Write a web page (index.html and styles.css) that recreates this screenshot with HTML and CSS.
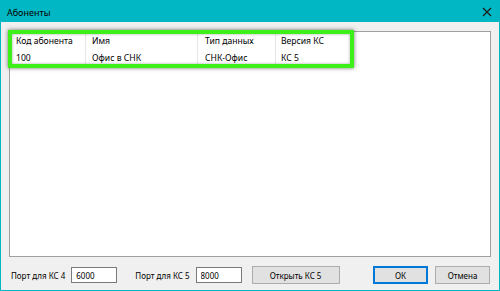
FILE: index.html
```html
<!DOCTYPE html>
<html lang="ru">
<head>
    <meta charset="UTF-8">
    <title>Абоненты</title>
    <link rel="stylesheet" href="styles.css">
</head>
<body>
    <div class="window">
        <div class="titlebar">
            <span class="title">Абоненты</span>
            <svg class="close" width="10" height="10" viewBox="0 0 10 10">
                <path d="M1 1 L9 9 M9 1 L1 9" stroke="#1a1a1a" stroke-width="1.2"/>
            </svg>
        </div>

        <div class="content">
            <div class="list">
                <div class="row header">
                    <div class="cell c1">Код абонента</div>
                    <div class="cell c2">Имя</div>
                    <div class="cell c3">Тип данных</div>
                    <div class="cell c4">Версия КС</div>
                </div>
                <div class="row">
                    <div class="cell c1">100</div>
                    <div class="cell c2">Офис в СНК</div>
                    <div class="cell c3">СНК-Офис</div>
                    <div class="cell c4">КС 5</div>
                </div>
            </div>
            <!-- annotation frame over the first rows -->
            <div class="highlight"></div>
        </div>

        <div class="footer">
            <label class="lbl">Порт для КС 4</label>
            <input class="port" type="text" value="6000">
            <label class="lbl second">Порт для КС 5</label>
            <input class="port" type="text" value="8000">
            <button class="btn open">Открыть КС 5</button>
            <button class="btn ok">ОК</button>
            <button class="btn cancel">Отмена</button>
        </div>
    </div>
</body>
</html>
```

FILE: styles.css
```css
body {
    margin: 0;
    font-family: "Noto Sans", "Open Sans", sans-serif;
    background-color: #f0f0f0;
}

.window {
    width: 500px;
    height: 291px;
    box-sizing: border-box;
    border: 1px solid #00b7c3;
    border-top: none;
    background-color: #f0f0f0;
    display: flex;
    flex-direction: column;
}

.titlebar {
    height: 22px;
    background-color: #00b7c3;
    margin: 0 -1px;
    display: flex;
    align-items: center;
    justify-content: space-between;
    padding: 0 8px 0 7px;
}

.title {
    font-size: 9px;
    color: #000;
    padding-top: 2px;
}

.close {
    display: block;
    margin-top: 1px;
}

.content {
    position: relative;
    padding: 9px 8px 0 8px;
}

.list {
    height: 226px;
    box-sizing: border-box;
    background-color: #fff;
    border: 1px solid #a0a0a0;
    font-size: 8.6px;
    color: #000;
}

.row {
    display: flex;
    height: 15px;
    align-items: center;
}

.row.header {
    height: 18px;
}

.cell {
    height: 100%;
    display: flex;
    align-items: center;
    box-sizing: border-box;
    padding-left: 6px;
    border-right: 1px solid #e5e5e5;
    white-space: nowrap;
}

.c1 { width: 76px; }
.c2 { width: 112px; }
.c3 { width: 78px; padding-left: 7px; }
.c4 { width: 75px; padding-left: 5px; border-right: none; }

.highlight {
    position: absolute;
    left: 7px;
    top: 8px;
    width: 346px;
    height: 38px;
    box-sizing: border-box;
    border: 4px solid #3df01a;
    box-shadow: 0 0 4px rgba(0, 0, 0, 0.55), inset 0 0 3px rgba(0, 0, 0, 0.35);
}

.footer {
    display: flex;
    align-items: center;
    padding: 9px 9px 0 10px;
    font-size: 8px;
    color: #000;
}

.lbl {
    white-space: nowrap;
}

.lbl.second {
    margin-left: 18px;
}

.port {
    width: 46px;
    height: 16px;
    box-sizing: border-box;
    margin-left: 6px;
    border: 1px solid #7a7a7a;
    background-color: #fff;
    font: inherit;
    padding: 0 4px;
    color: #000;
}

.btn {
    height: 18px;
    box-sizing: border-box;
    background-color: #e1e1e1;
    border: 1px solid #adadad;
    font: inherit;
    color: #000;
    padding: 0;
}

.open {
    width: 88px;
    margin-left: 10px;
}

.ok {
    width: 55px;
    margin-left: auto;
    border: 1px solid #0078d7;
    box-shadow: inset 0 0 0 1px #0078d7;
}

.cancel {
    width: 55px;
    margin-left: 7px;
}
```
